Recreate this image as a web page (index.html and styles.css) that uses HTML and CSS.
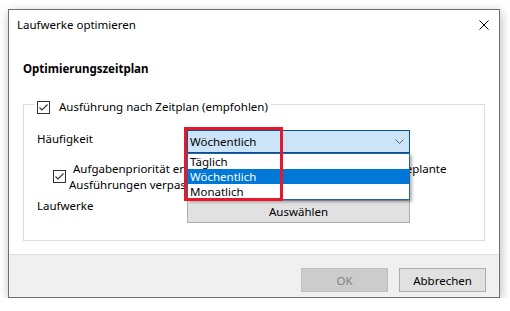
FILE: index.html
```html
<!DOCTYPE html>
<html lang="de">
<head>
    <meta charset="UTF-8">
    <title>Laufwerke optimieren</title>
    <link rel="stylesheet" href="styles.css">
</head>
<body>
    <div class="window">
        <div class="titlebar">
            <div class="title">Laufwerke optimieren</div>
            <svg class="close" width="10" height="10" viewBox="0 0 10 10">
                <path d="M0.5 0.5 L9.5 9.5 M9.5 0.5 L0.5 9.5" stroke="#000" stroke-width="1" fill="none"/>
            </svg>
        </div>

        <div class="content">
            <div class="heading">Optimierungszeitplan</div>

            <fieldset class="group">
                <legend class="group-legend">
                    <span class="checkbox checked">
                        <svg width="11" height="11" viewBox="0 0 11 11"><path d="M1.5 5.5 L4 8 L9.5 2.5" stroke="#333" stroke-width="1.1" fill="none"/></svg>
                    </span>
                    <span>Ausführung nach Zeitplan (empfohlen)</span>
                </legend>

                <div class="rows">
                    <div class="row">
                        <div class="label">Häufigkeit</div>
                        <div class="combo-wrap">
                            <div class="combo">
                                <span>Wöchentlich</span>
                                <svg width="9" height="5" viewBox="0 0 9 5"><path d="M0.5 0.5 L4.5 4.5 L8.5 0.5" stroke="#606060" stroke-width="1" fill="none"/></svg>
                            </div>
                            <ul class="dropdown">
                                <li>Täglich</li>
                                <li class="selected">Wöchentlich</li>
                                <li>Monatlich</li>
                            </ul>
                            <div class="highlight"></div>
                        </div>
                    </div>

                    <div class="row-check">
                        <span class="checkbox checked">
                            <svg width="11" height="11" viewBox="0 0 11 11"><path d="M1.5 5.5 L4 8 L9.5 2.5" stroke="#333" stroke-width="1.1" fill="none"/></svg>
                        </span>
                        <div class="check-text">Aufgabenpriorität erhöhen, wenn drei aufeinanderfolgende geplante<br>Ausführungen verpasst werden</div>
                    </div>

                    <div class="row drives">
                        <div class="label">Laufwerke</div>
                        <button class="btn wide">Auswählen</button>
                    </div>
                </div>
            </fieldset>
        </div>

        <div class="footer">
            <button class="btn disabled">OK</button>
            <button class="btn">Abbrechen</button>
        </div>
    </div>
</body>
</html>
```

FILE: styles.css
```css
* {
    box-sizing: border-box;
}

body {
    margin: 0;
    background: #ffffff;
    font-family: 'Noto Sans', 'Segoe UI', sans-serif;
    font-size: 11.5px;
    line-height: 16px;
    color: #000;
}

.window {
    margin: 9px 0 0 8px;
    width: 492px;
    height: 289px;
    border: 1px solid #707070;
    background: #fff;
    box-shadow: 1px 3px 10px rgba(0, 0, 0, 0.28);
    display: flex;
    flex-direction: column;
}

.titlebar {
    height: 30px;
    padding: 0 10px 0 8px;
    display: flex;
    justify-content: space-between;
    align-items: center;
}

.content {
    flex: 1;
    padding: 21px 14px 0 14px;
}

.heading {
    font-weight: bold;
}

.group {
    margin: 17px 0 0;
    padding: 0 10px 17px;
    border: 1px solid #dcdcdc;
    min-width: 0;
}

.group-legend {
    padding: 6px 3px 0;
    display: flex;
    align-items: center;
    gap: 9px;
    height: 20px;
}

.checkbox {
    width: 13px;
    height: 13px;
    border: 1px solid #333;
    background: #fff;
    display: flex;
    align-items: center;
    justify-content: center;
    flex-shrink: 0;
}

.rows {
    padding: 16px 0 0 3px;
}

.row {
    display: grid;
    grid-template-columns: 150px 223px;
    align-items: start;
}

.label {
    margin-top: 1px;
}

.drives .label {
    margin-top: -2px;
}

.combo-wrap {
    position: relative;
}

.combo {
    height: 23px;
    border: 1px solid #005499;
    background: #cce4f7;
    padding: 0 5px 0 2px;
    display: flex;
    justify-content: space-between;
    align-items: center;
}

.dropdown {
    position: absolute;
    top: 100%;
    left: 0;
    width: 223px;
    margin: 0;
    padding: 0;
    list-style: none;
    background: #fff;
    border: 1px solid #2a62a0;
    box-shadow: 2px 2px 3px rgba(0, 0, 0, 0.3);
    z-index: 2;
}

.dropdown li {
    height: 15px;
    line-height: 15px;
    padding-left: 2px;
}

.dropdown li.selected {
    background: #0078d7;
    color: #fff;
}

.highlight {
    position: absolute;
    left: -3px;
    top: -3px;
    width: 99px;
    height: 74px;
    border: 3px solid #e8182a;
    z-index: 3;
}

.row-check {
    margin-top: 8px;
    padding-left: 16px;
    display: flex;
    gap: 3px;
}

.row-check .checkbox {
    margin-top: 9px;
}

.check-text {
    white-space: nowrap;
    text-indent: 4px;
}

.row-check + .row {
    margin-top: 7px;
}

.btn {
    height: 23px;
    border: 1px solid #adadad;
    background: #e1e1e1;
    font-family: inherit;
    font-size: 11.5px;
    color: #000;
    padding: 0;
}

.btn.wide {
    width: 223px;
}

.footer {
    height: 43px;
    border-top: 1px solid #dfdfdf;
    background: #f0f0f0;
    display: flex;
    justify-content: flex-end;
    align-items: flex-start;
    gap: 11px;
    padding: 13px 13px 0 0;
}

.footer .btn {
    width: 87px;
    height: 24px;
}

.btn.disabled {
    background: #cccccc;
    border-color: #bfbfbf;
    color: #838383;
}
```
